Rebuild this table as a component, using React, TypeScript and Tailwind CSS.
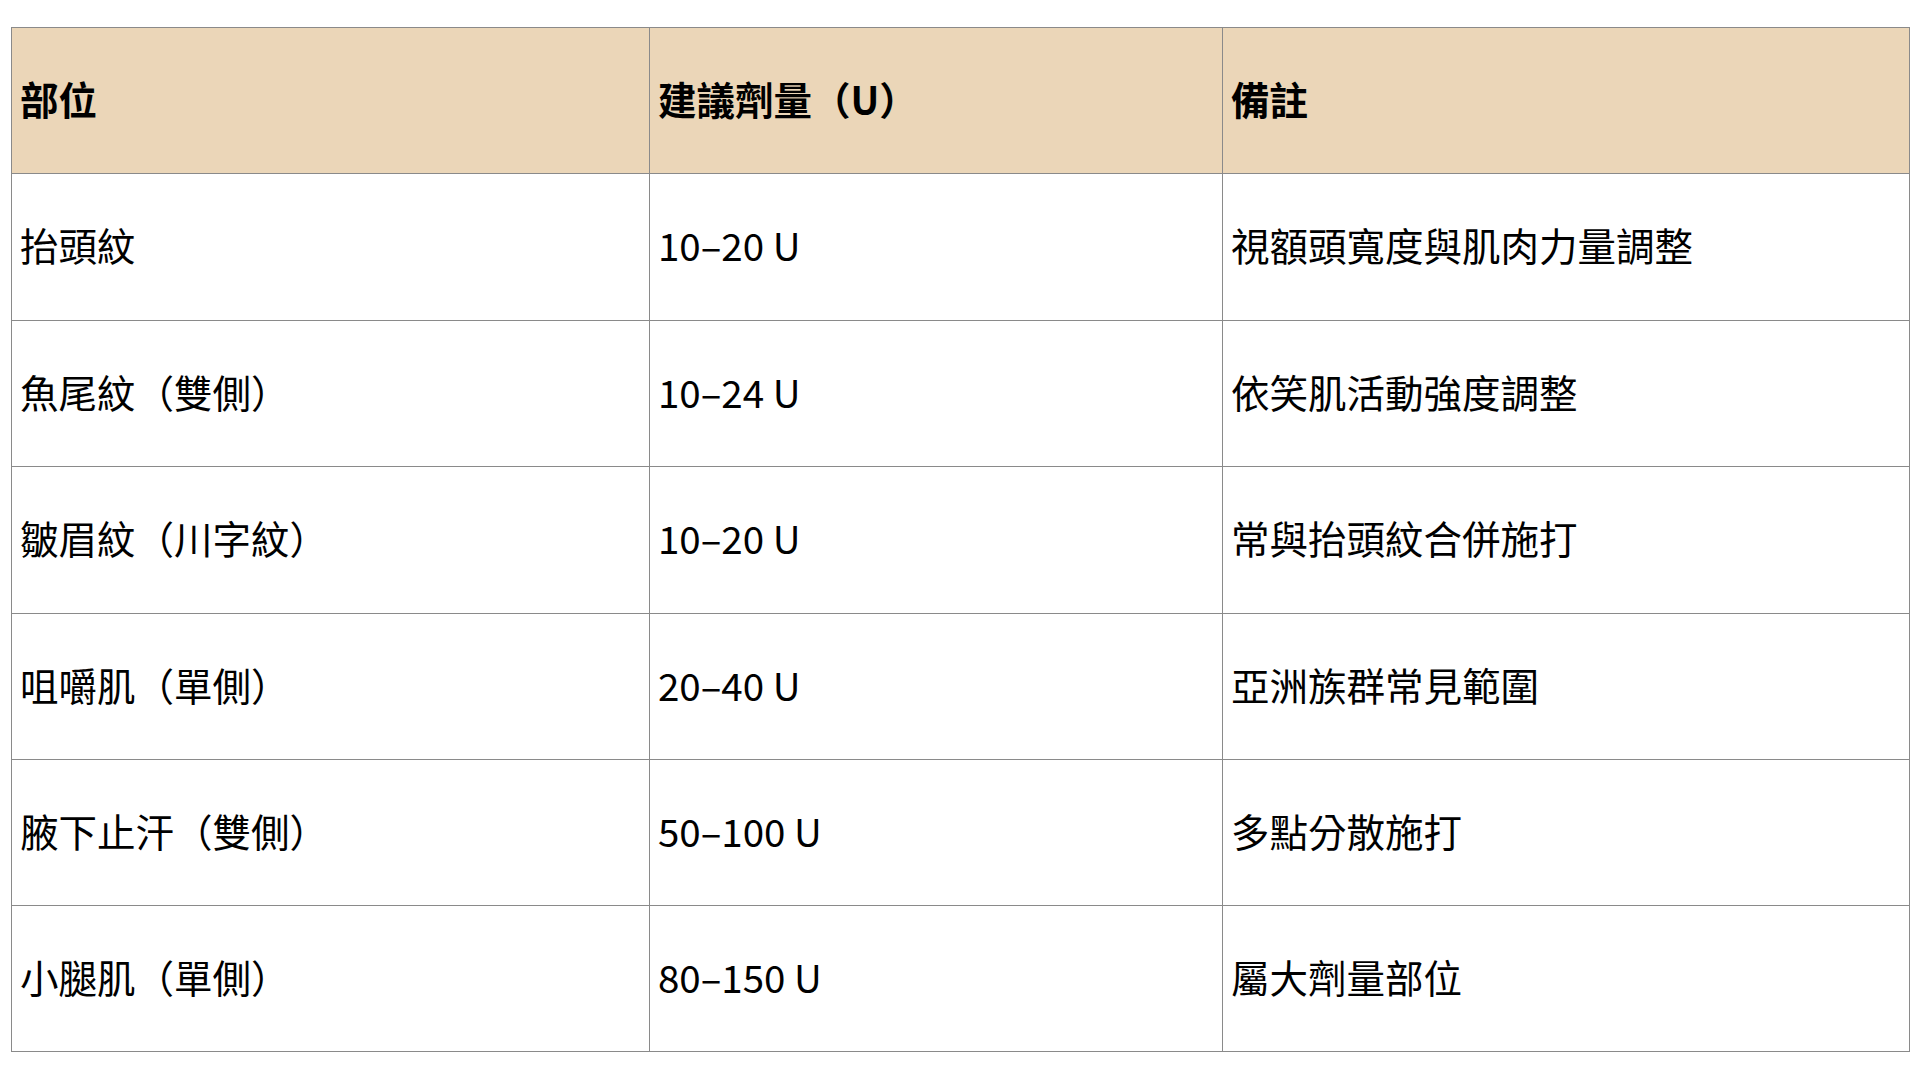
const rows: { part: string; dose: string; note: string; h: string }[] = [
  { part: "抬頭紋", dose: "10–20 U", note: "視額頭寬度與肌肉力量調整", h: "h-[147px]" },
  { part: "魚尾紋（雙側）", dose: "10–24 U", note: "依笑肌活動強度調整", h: "h-[146px]" },
  { part: "皺眉紋（川字紋）", dose: "10–20 U", note: "常與抬頭紋合併施打", h: "h-[147px]" },
  { part: "咀嚼肌（單側）", dose: "20–40 U", note: "亞洲族群常見範圍", h: "h-[146px]" },
  { part: "腋下止汗（雙側）", dose: "50–100 U", note: "多點分散施打", h: "h-[146px]" },
  { part: "小腿肌（單側）", dose: "80–150 U", note: "屬大劑量部位", h: "h-[146px]" },
];

const cell = "border border-[#8a8a8a] pl-[8px] pr-[8px] pt-0 pb-[5px] align-middle";

export default function App() {
  return (
    <div
      className="min-h-screen bg-white pt-[27px] pl-[11px] pr-[11px] text-black"
      style={{ fontFamily: '"Noto Sans CJK TC", "Noto Sans", sans-serif' }}
    >
      <table className="w-[1898px] table-fixed border-collapse text-left text-[38.5px] leading-none">
        <colgroup>
          <col className="w-[638px]" />
          <col className="w-[573px]" />
          <col className="w-[687px]" />
        </colgroup>
        <thead>
          <tr className="h-[146px] bg-[#ebd6b8]">
            <th className={`${cell} font-bold`}>部位</th>
            <th className={`${cell} font-bold`}>建議劑量（U）</th>
            <th className={`${cell} font-bold`}>備註</th>
          </tr>
        </thead>
        <tbody>
          {rows.map((r) => (
            <tr key={r.part} className={r.h}>
              <td className={cell}>{r.part}</td>
              <td className={cell}>{r.dose}</td>
              <td className={cell}>{r.note}</td>
            </tr>
          ))}
        </tbody>
      </table>
    </div>
  );
}
